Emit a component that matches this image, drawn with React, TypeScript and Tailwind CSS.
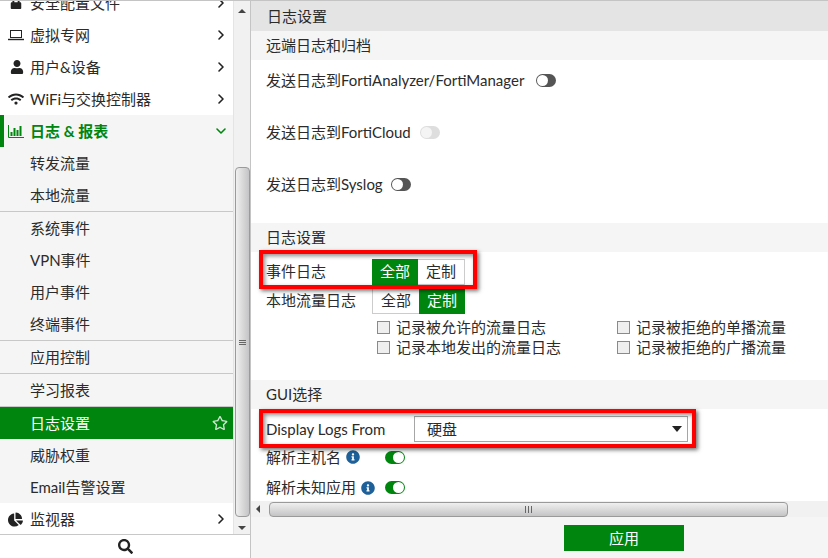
import React from 'react';
import { FaUser, FaWifi, FaChartPie, FaSearch, FaInfoCircle, FaRegStar, FaLock } from 'react-icons/fa';
import { LuChevronRight, LuChevronDown } from 'react-icons/lu';

const LaptopIcon = () => (
    <svg width="16" height="12" viewBox="0 0 16 12" fill="none" stroke="#222" strokeWidth="1">
        <rect x="2.5" y="1.5" width="11" height="7" />
        <path d="M0 10.5h16" strokeWidth="1.4" />
    </svg>
);

const BarsIcon = () => (
    <svg width="16" height="13" viewBox="0 0 16 13" fill="none" stroke="#00860f">
        <path d="M.5 0v12.5H16" />
        <path d="M3.5 11V7M6.5 11V3M9.5 11V5M12.5 11V1" strokeWidth="2" />
    </svg>
);

const TopItem = ({ icon, label }: { icon: React.ReactNode; label: string }) => (
    <div className="h-8 flex items-center bg-white text-[#2b2b2b]">
        <div className="w-[30px] pl-2 flex justify-start">{icon}</div>
        <span className="flex-1">{label}</span>
        <LuChevronRight className="mr-1 text-[#222]" size={16} strokeWidth={2.4} />
    </div>
);

const SubItem = ({ label, divider }: { label: string; divider?: boolean }) => (
    <div className={`flex items-center pl-[30px] text-[#2b2b2b] ${divider ? 'h-[33px] border-b border-[#c8c8c8]' : 'h-8'}`}>
        {label}
    </div>
);

const Toggle = ({ on, disabled }: { on?: boolean; disabled?: boolean }) => (
    <span
        className={`inline-flex h-[13px] w-5 rounded-full items-center p-px ${on ? 'bg-[#00860f] justify-end' : disabled ? 'bg-[#dedede]' : 'bg-[#555]'}`}
    >
        <span className={`h-[11px] w-[11px] rounded-full ${disabled ? 'bg-[#f4f4f4]' : 'bg-white'}`} />
    </span>
);

const SectionTitle = ({ label }: { label: string }) => (
    <div className="h-[29px] bg-[#f5f5f5] flex items-center pl-[15px]">{label}</div>
);

const LogCheck = ({ label }: { label: string }) => (
    <div className="flex items-center h-[19px]">
        <span className="h-[13px] w-[13px] border border-[#8a8a8a] bg-[#efefef] mr-[6px]" />
        {label}
    </div>
);

const Segment = ({ left }: { left: boolean }) => (
    <div className="flex w-[93px] h-[26px] text-[15px]">
        <div className={`flex-1 flex items-center justify-center ${left ? 'bg-[#00860f] text-white' : 'border border-r-0 border-[#ccc]'}`}>全部</div>
        <div className={`flex-1 flex items-center justify-center ${left ? 'border border-l-0 border-[#ccc]' : 'bg-[#00860f] text-white'}`}>定制</div>
    </div>
);

export default function App() {
    return (
        <div className="w-[828px] h-[558px] overflow-hidden flex bg-white text-[15px] text-[#2b2b2b] border-t border-[#c4c4c4] relative" style={{ fontFamily: 'Lato, "Noto Sans CJK SC", sans-serif' }}>
            {/* Sidebar */}
            <aside className="w-[250px] shrink-0 flex flex-col h-full">
                <div className="flex h-[534px] border-b border-[#c8c8c8]">
                    <nav className="w-[233px] overflow-hidden">
                        <div className="-mt-[14px]">
                            <TopItem icon={<FaLock size={12} className="text-[#222] ml-0.5" />} label="安全配置文件" />
                            <TopItem icon={<LaptopIcon />} label="虚拟专网" />
                            <TopItem icon={<FaUser size={14} className="text-[#222] ml-0.5" />} label="用户&设备" />
                            <TopItem icon={<FaWifi size={16} className="text-[#222]" />} label="WiFi与交换控制器" />
                            <div className="bg-[#f5f5f5]">
                                <div className="h-8 flex items-center border-l-4 border-[#00860f] text-[#00860f] font-bold">
                                    <div className="w-[26px] pl-1"><BarsIcon /></div>
                                    <span className="flex-1">日志 & 报表</span>
                                    <LuChevronDown className="mr-1" size={16} strokeWidth={2.4} />
                                </div>
                                <SubItem label="转发流量" />
                                <SubItem label="本地流量" divider />
                                <SubItem label="系统事件" />
                                <SubItem label="VPN事件" />
                                <SubItem label="用户事件" />
                                <SubItem label="终端事件" divider />
                                <SubItem label="应用控制" divider />
                                <SubItem label="学习报表" divider />
                                <div className="h-8 bg-[#00860f] text-white flex items-center pl-[30px] justify-between pr-[5px]">
                                    日志设置
                                    <FaRegStar size={16} className="text-[#cfe8d2]" />
                                </div>
                                <SubItem label="威胁权重" />
                                <SubItem label="Email告警设置" />
                            </div>
                            <TopItem icon={<FaChartPie size={15} className="text-[#222]" />} label="监视器" />
                        </div>
                    </nav>
                    {/* Vertical scrollbar */}
                    <div className="w-[17px] bg-[#f1f1f1] flex flex-col items-center border-l border-[#e4e4e4]">
                        <div className="mt-[8px] h-0 w-0 border-x-[4px] border-b-[4px] border-x-transparent border-b-[#444]" />
                        <div className="mt-[154px] w-[15px] h-[350px] bg-gradient-to-r from-[#f0f0f0] to-[#c4c4c6] border border-[#9a9a9a] rounded-sm flex items-center justify-center">
                            <div className="w-[7px] h-[5px] border-y border-[#666] flex items-center"><div className="w-full h-px bg-[#666]" /></div>
                        </div>
                        <div className="mt-[9px] h-0 w-0 border-x-[4px] border-t-[4px] border-x-transparent border-t-[#444]" />
                    </div>
                </div>
                <div className="flex-1 flex items-center justify-center">
                    <FaSearch size={15} className="text-[#222]" />
                </div>
            </aside>

            {/* Main panel */}
            <main className="flex-1 min-w-0 flex flex-col border-l border-[#c4c4c4]">
                <div className="h-[30px] bg-[#e4e4e4] flex items-center pl-4 shrink-0">日志设置</div>
                <div className="flex-1 min-h-0 overflow-hidden">
                    <SectionTitle label="远端日志和归档" />
                    <div className="h-[163px] pl-[15px] pt-[7px] flex flex-col gap-[26px]">
                        <div className="h-[26px] flex items-center gap-3">发送日志到FortiAnalyzer/FortiManager <Toggle /></div>
                        <div className="h-[26px] flex items-center gap-[9px]">发送日志到FortiCloud <Toggle disabled /></div>
                        <div className="h-[26px] flex items-center gap-2">发送日志到Syslog <Toggle /></div>
                    </div>
                    <SectionTitle label="日志设置" />
                    <div className="h-[128px] pl-[15px] pt-[7px]">
                        <div className="flex items-center h-[25px]">
                            <span className="w-[106px]">事件日志</span>
                            <Segment left />
                        </div>
                        <div className="flex items-center h-[25px] mt-[4px]">
                            <span className="w-[106px]">本地流量日志</span>
                            <Segment left={false} />
                        </div>
                        <div className="grid grid-cols-[240px_1fr] pl-[111px] mt-[5px] gap-y-px">
                            <LogCheck label="记录被允许的流量日志" />
                            <LogCheck label="记录被拒绝的单播流量" />
                            <LogCheck label="记录本地发出的流量日志" />
                            <LogCheck label="记录被拒绝的广播流量" />
                        </div>
                    </div>
                    <SectionTitle label="GUI选择" />
                    <div className="pl-[15px] pt-[7px]">
                        <div className="flex items-center h-[26px]">
                            <span className="w-[148px]">Display Logs From</span>
                            <div className="w-[274px] h-[26px] border border-[#a6a6a6] flex items-center pl-[12px] pr-[5px] justify-between">
                                硬盘
                                <span className="h-0 w-0 border-x-[5px] border-t-[6px] border-x-transparent border-t-[#222]" />
                            </div>
                        </div>
                        <div className="flex items-center h-[28px] mt-[1px]">
                            <span>解析主机名</span>
                            <FaInfoCircle size={14} className="text-[#1e6099] ml-[5px]" />
                            <span className="ml-[25px] flex"><Toggle on /></span>
                        </div>
                        <div className="flex items-center h-[29px] mt-[2px]">
                            <span>解析未知应用</span>
                            <FaInfoCircle size={14} className="text-[#1e6099] ml-[5px]" />
                            <span className="ml-[10px] flex"><Toggle on /></span>
                        </div>
                    </div>
                </div>
                {/* Horizontal scrollbar */}
                <div className="h-[16px] shrink-0 bg-[#f1f1f1] flex items-center">
                    <div className="ml-[5px] h-0 w-0 border-y-[4px] border-r-[4px] border-y-transparent border-r-[#444]" />
                    <div className="ml-[9px] w-[519px] h-[15px] bg-gradient-to-b from-[#f0f0f0] to-[#c4c4c6] border border-[#9a9a9a] rounded-sm flex items-center justify-center">
                        <div className="w-[7px] h-[7px] border-x border-[#666] flex justify-center"><div className="h-full w-px bg-[#666]" /></div>
                    </div>
                </div>
                <div className="h-[41px] shrink-0 bg-[#f5f5f5] flex items-start pl-[313px] pt-2">
                    <button className="w-[120px] h-[26px] bg-[#00860f] text-white flex items-center justify-center">应用</button>
                </div>
            </main>

            {/* Red annotation boxes */}
            <div className="absolute left-[259px] top-[249px] w-[218px] h-[39px] border-4 border-[#f00] shadow-[2px_2px_4px_rgba(0,0,0,0.55),inset_2px_2px_4px_rgba(0,0,0,0.45)]" />
            <div className="absolute left-[259px] top-[408px] w-[437px] h-[39px] border-4 border-[#f00] shadow-[2px_2px_4px_rgba(0,0,0,0.55),inset_2px_2px_4px_rgba(0,0,0,0.45)]" />
        </div>
    );
}
